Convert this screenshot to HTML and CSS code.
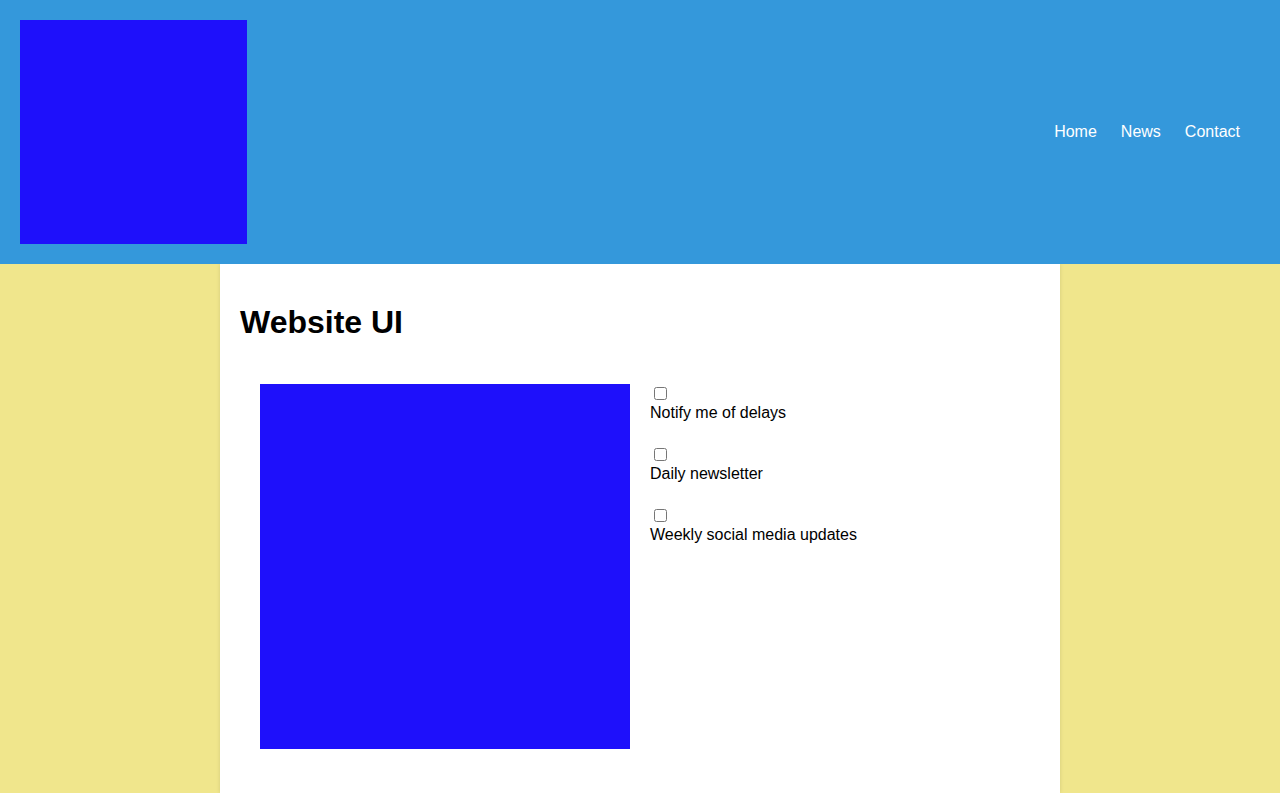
FILE: index.html
```html
<!DOCTYPE html>
<html lang="en">
<head>
<meta charset="utf-8">
<title>Website UI</title>
<link rel="stylesheet" href="styles.css">
</head>
<body>
<header class="site-header">
  <div class="logo"></div>
  <nav class="nav">
    <a href="#">Home</a>
    <a href="#">News</a>
    <a href="#">Contact</a>
  </nav>
</header>
<main class="main">
  <h1 class="title">Website UI</h1>
  <section class="content">
    <div class="picture"></div>
    <div class="options">
      <div class="option"><input type="checkbox" id="o1"><br><label for="o1">Notify me of delays</label></div>
      <div class="option"><input type="checkbox" id="o2"><br><label for="o2">Daily newsletter</label></div>
      <div class="option"><input type="checkbox" id="o3"><br><label for="o3">Weekly social media updates</label></div>
    </div>
  </section>
</main>
</body>
</html>
```
FILE: styles.css
```css
html, body {
  margin: 0;
  padding: 0;
}
body {
  background: #f0e68c;
  font-family: "Liberation Sans", Arial, sans-serif;
  font-size: 16px;
  color: #000;
  min-height: 793px;
}
.site-header {
  position: relative;
  z-index: 1;
  background: #3498db;
  display: flex;
  align-items: center;
  justify-content: space-between;
  padding: 20px 40px 20px 20px;
}
.logo {
  width: 227px;
  height: 224px;
  background: #1e10fb;
}
.nav {
  display: flex;
  gap: 24px;
}
.nav a {
  color: #fff;
  text-decoration: none;
}
.main {
  width: 800px;
  margin: 0 auto;
  background: #fff;
  padding: 20px 20px 24px;
  min-height: 485px;
  box-shadow: 0 0 4px rgba(0, 0, 0, 0.12);
}
.title {
  font-size: 32px;
  margin: 20px 0 23px;
}
.content {
  display: grid;
  grid-template-columns: 1fr 1fr;
  gap: 20px;
  padding: 20px;
}
.picture {
  height: 365px;
  background: #1e10fb;
}
.option {
  margin-bottom: 23px;
}
```
